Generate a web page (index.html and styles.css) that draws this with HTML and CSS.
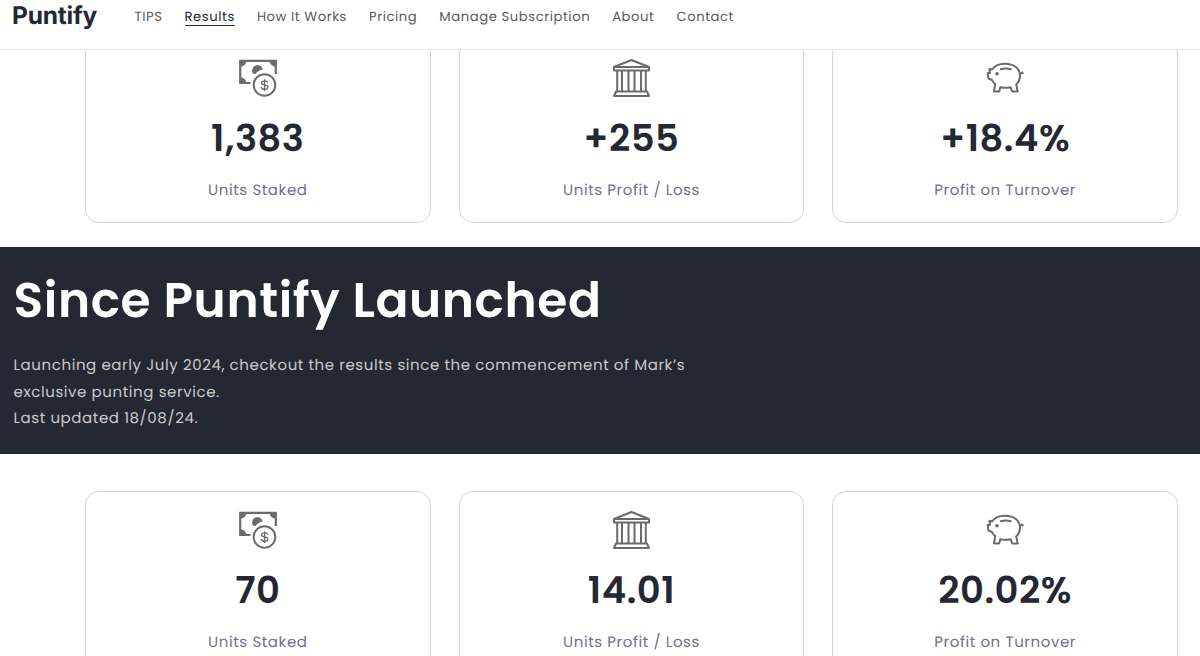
FILE: index.html
```html
<!DOCTYPE html>
<html lang="en">
<head>
    <meta charset="UTF-8">
    <meta name="viewport" content="width=device-width, initial-scale=1.0">
    <title>Results - Puntify</title>
    <link rel="stylesheet" href="styles.css">
</head>
<body>
    <svg class="sprite" aria-hidden="true">
        <symbol id="icon-money" viewBox="0 0 40 40">
            <path d="M12.500 25H2.200V2.800h35.600V16" fill="none" stroke="currentColor" stroke-width="2.200"/>
            <path d="M2 2.500h6.500a6.200 6.200 0 0 1-6.500 6.200zM38 2.500h-6.500a6.200 6.200 0 0 0 6.500 6.200zM2 25.500h6.500a6.200 6.200 0 0 0-6.500-6.200zM15 15.500a5.400 5.400 0 1 1 9.800-4c-3 .5-5.500 2-7.300 4.500z" fill="currentColor"/>
            <circle cx="26.500" cy="27" r="10.800" fill="none" stroke="currentColor" stroke-width="2"/>
            <path d="M29.700 24.700c-.3-1.300-1.500-1.900-3.100-1.900-1.800 0-3 .8-3 2.100 0 3 6.300 1.200 6.300 4.200 0 1.400-1.300 2.200-3.200 2.200s-3.200-.8-3.500-2.300M26.600 21.300v11.600" fill="none" stroke="currentColor" stroke-width="1.300"/>
        </symbol>
        <symbol id="icon-bank" viewBox="0 0 40 40">
            <g fill="none" stroke="currentColor" stroke-width="2" stroke-linejoin="round">
                <path d="M3 9 20.500 2 38 9v3.500H3zM3 9h35M5 33.500h31l2 4.500H3z"/>
                <path d="M6.200 12.500v21M11 12.500v21M17.500 12.500v21M23.500 12.500v21M30 12.500v21M34.800 12.500v21"/>
            </g>
        </symbol>
        <symbol id="icon-pig" viewBox="0 0 40 40">
            <g fill="none" stroke="currentColor" stroke-width="2" stroke-linejoin="round" stroke-linecap="round">
                <path d="M7 11.500C9.500 8 14 5.700 20 5.700c9 0 15 5 15 12 0 3.500-1.300 6.500-3.800 8.800l1.500 7h-5.500l-1.700-4.300c-3.200.8-7 .8-10.200 0l-1.100 4.300H9l1.200-7.500C8.500 24.800 7.500 23.300 7 22l-3.500-1.400-.8-5.500H5l-.5-4.400z"/>
                <path d="M15.800 11.200c3.500-1 6.800-1 10 0"/>
                <path d="M35 15.500c3 1 3.500-1.500 2-1.500s-.5 2.500 1.200 1.500" stroke-width="1.200"/>
            </g>
            <circle cx="12" cy="15.800" r="1.800" fill="currentColor"/>
        </symbol>
    </svg>

    <header class="header">
        <a class="logo" href="#">Puntify</a>
        <nav class="nav">
            <a href="#">TIPS</a>
            <a href="#" class="active">Results</a>
            <a href="#">How It Works</a>
            <a href="#">Pricing</a>
            <a href="#">Manage Subscription</a>
            <a href="#">About</a>
            <a href="#">Contact</a>
        </nav>
    </header>

    <section class="stats stats-top">
        <div class="stat-card">
            <svg class="icon"><use href="#icon-money"/></svg>
            <div class="stat-number">1,383</div>
            <div class="stat-label">Units Staked</div>
        </div>
        <div class="stat-card">
            <svg class="icon"><use href="#icon-bank"/></svg>
            <div class="stat-number">+255</div>
            <div class="stat-label">Units Profit / Loss</div>
        </div>
        <div class="stat-card">
            <svg class="icon"><use href="#icon-pig"/></svg>
            <div class="stat-number">+18.4%</div>
            <div class="stat-label">Profit on Turnover</div>
        </div>
    </section>

    <section class="banner">
        <h1>Since Puntify Launched</h1>
        <p>Launching early July 2024, checkout the results since the commencement of Mark’s<br>
        exclusive punting service.<br>
        Last updated 18/08/24.</p>
    </section>

    <section class="stats stats-launch">
        <div class="stat-card">
            <svg class="icon"><use href="#icon-money"/></svg>
            <div class="stat-number">70</div>
            <div class="stat-label">Units Staked</div>
        </div>
        <div class="stat-card">
            <svg class="icon"><use href="#icon-bank"/></svg>
            <div class="stat-number">14.01</div>
            <div class="stat-label">Units Profit / Loss</div>
        </div>
        <div class="stat-card">
            <svg class="icon"><use href="#icon-pig"/></svg>
            <div class="stat-number">20.02%</div>
            <div class="stat-label">Profit on Turnover</div>
        </div>
    </section>
</body>
</html>
```
FILE: styles.css
```css
* {
    margin: 0;
    padding: 0;
    box-sizing: border-box;
}

html {
    height: 100%;
    overflow: hidden;
}

body {
    font-family: Poppins, Inter, 'Open Sans', sans-serif;
    height: 100%;
    background: white;
    color: #242833;
    overflow: hidden;
    text-rendering: geometricPrecision;
}

.sprite {
    display: none;
}

.header {
    position: sticky;
    top: 0;
    z-index: 1;
    display: flex;
    height: 50px;
    padding-left: 12px;
    background: white;
    border-bottom: 1px solid #e8e8e8;
}

.logo {
    width: 122.500px;
    color: #242833;
    font-family: Inter, Poppins, sans-serif;
    font-size: 24.500px;
    font-weight: 700;
    line-height: 30px;
    letter-spacing: -0.2px;
    text-decoration: none;
}

.nav {
    display: flex;
    align-items: flex-start;
    gap: 22px;
    padding-top: 8px;
}

.nav a {
    color: #5b5b5d;
    font-size: 13.200px;
    line-height: 17px;
    letter-spacing: 0.560px;
    text-decoration: none;
    white-space: nowrap;
}

.nav .active {
    color: #242833;
    border-bottom: 1px solid #242833;
}

.stats {
    display: grid;
    grid-template-columns: repeat(3, 1fr);
    gap: 28px;
    padding: 37px 22px 24px 85px;
}

.stats-top {
    margin-top: -10px;
    padding-top: 0;
}

.stat-card {
    display: flex;
    flex-direction: column;
    align-items: center;
    height: 183px;
    padding-top: 17px;
    border: 1px solid #d2d2d4;
    border-radius: 14px;
}

.stats-launch .stat-card {
    padding-top: 17.500px;
}

.icon {
    width: 40px;
    height: 40px;
    color: #6b6b6b;
}

.stat-number {
    margin-top: 16px;
    font-size: 37px;
    font-weight: 600;
    line-height: 49px;
    letter-spacing: 0.5px;
}

.stat-label {
    margin-top: 17px;
    color: #716f94;
    font-size: 15px;
    line-height: 22px;
    letter-spacing: 0.6px;
}

.banner {
    height: 207px;
    padding: 24px 13.500px;
    background: #242833;
}

.banner h1 {
    color: white;
    font-size: 48.700px;
    font-weight: 600;
    line-height: 60px;
    letter-spacing: 0.6px;
}

.banner p {
    margin-top: 22px;
    color: #c8c9cc;
    font-size: 15px;
    line-height: 26.700px;
    letter-spacing: 0.6px;
}
```
